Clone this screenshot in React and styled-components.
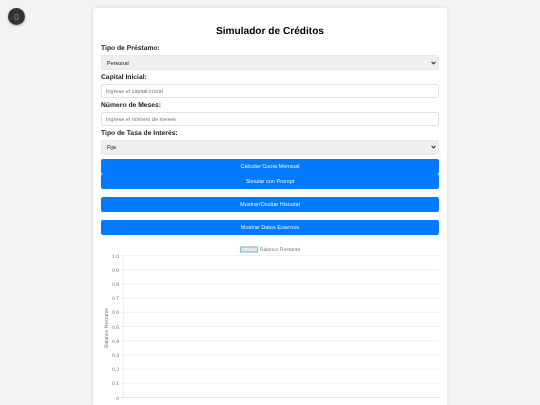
import React from 'react';
import styled, { createGlobalStyle } from 'styled-components';

const GlobalStyle = createGlobalStyle`
  * {
    box-sizing: border-box;
  }
  html, body {
    margin: 0;
    height: 405px;
    overflow: hidden;
    background: #f4f4f4;
    font-family: "Liberation Sans", Arial, sans-serif;
    text-rendering: geometricPrecision;
  }
`;

const chevron = encodeURIComponent(
  '<svg xmlns="http://www.w3.org/2000/svg" width="5" height="4" viewBox="0 0 5 4"><path d="M0.6 0.8 L2.5 2.9 L4.4 0.8" fill="none" stroke="#333" stroke-width="1.1"/></svg>'
);

const Page = styled.div`
  display: flex;
  justify-content: center;
  padding-top: 8px;
`;

const ThemeToggle = styled.button`
  position: absolute;
  left: 8px;
  top: 8px;
  width: 17px;
  height: 17px;
  padding: 0;
  display: flex;
  align-items: center;
  justify-content: center;
  border: none;
  border-radius: 50%;
  background: #333333;
  box-shadow: 0 1px 3px rgba(0, 0, 0, 0.3);
`;

const Card = styled.main`
  width: 354px;
  height: 397px;
  padding: 8px;
  background: #ffffff;
  border-radius: 4px 4px 0 0;
  box-shadow: 0 0 5px rgba(0, 0, 0, 0.1);
  will-change: transform;
`;

const Title = styled.h1`
  margin: 9px 0 2px;
  font-size: 10.15px;
  line-height: 14px;
  text-align: center;
  color: #000000;
`;

const Label = styled.label`
  display: block;
  height: ${(props) => props.$height || 14}px;
  padding-top: 1px;
  font-size: 6.75px;
  line-height: 13px;
  font-weight: 700;
  color: #222222;
`;

const Select = styled.select`
  display: block;
  width: 100%;
  height: 15px;
  margin-bottom: ${(props) => props.$gap}px;
  padding: 0 5px;
  appearance: none;
  font-family: inherit;
  font-size: 5.5px;
  color: #222222;
  background: #efefef url("data:image/svg+xml,${chevron}") no-repeat right 2px center;
  border: 1px solid #e9e9e9;
  border-radius: 2px;
`;

const Input = styled.input`
  display: block;
  width: 100%;
  height: 14px;
  padding: 0 4px;
  font-family: inherit;
  font-size: 5.5px;
  background: #ffffff;
  border: 1px solid #e2e2e2;
  border-radius: 2px;

  &::placeholder {
    color: #777777;
  }
`;

const Button = styled.button`
  display: block;
  width: 100%;
  height: 15px;
  margin-bottom: ${(props) => props.$gap}px;
  padding: 0;
  font-family: inherit;
  font-size: 5.55px;
  color: #e6f2ff;
  background: #007bff;
  border: none;
  border-radius: 2px;
`;

const ChartFrame = styled.svg`
  display: block;
  margin: 9.5px 0 0 -8px;
`;

const yTicks = ['1.0', '0.9', '0.8', '0.7', '0.6', '0.5', '0.4', '0.3', '0.2', '0.1', '0'];

// empty chart: only legend, axis and grid, coordinates relative to the chart box
const BalanceChart = () => (
  <ChartFrame width="354" height="158" viewBox="0 0 354 158">
    <rect x="147.5" y="3" width="17" height="5" fill="#e6e6e6" stroke="#7fc4c4" strokeWidth="1.2" />
    <text x="167" y="7.3" fontSize="5.1" fill="#777">Balance Restante</text>
    <text
      transform="translate(14.5 84) rotate(-90)"
      fontSize="5.1"
      fill="#777"
      textAnchor="middle"
    >
      Balance Restante
    </text>
    {yTicks.map((tick, i) => {
      const y = 11.5 + i * 14.2;
      return (
        <g key={tick}>
          <line x1="28" x2="346" y1={y} y2={y} stroke={i === 10 ? '#e2e2e2' : '#f0f0f0'} />
          <text x="26" y={y + 2} fontSize="5.1" fill="#777" textAnchor="end">{tick}</text>
        </g>
      );
    })}
    <line x1="30.5" x2="30.5" y1="11" y2="154" stroke="#eeeeee" />
  </ChartFrame>
);

const App = () => (
  <Page>
    <GlobalStyle />
    <ThemeToggle aria-label="tema">
      <svg width="5" height="6" viewBox="0 0 5 6">
        <rect x="1" y="0.5" width="3" height="5" fill="none" stroke="#666" />
      </svg>
    </ThemeToggle>
    <Card>
      <Title>Simulador de Créditos</Title>
      <Label htmlFor="tipo">Tipo de Préstamo:</Label>
      <Select id="tipo" defaultValue="personal" $gap={0}>
        <option value="personal">Personal</option>
      </Select>
      <Label htmlFor="capital">Capital Inicial:</Label>
      <Input id="capital" placeholder="Ingrese el capital inicial" />
      <Label htmlFor="meses">Número de Meses:</Label>
      <Input id="meses" placeholder="Ingrese el número de meses" />
      <Label htmlFor="tasa" $height={13.5}>Tipo de Tasa de Interés:</Label>
      <Select id="tasa" defaultValue="fija" $gap={4}>
        <option value="fija">Fija</option>
      </Select>
      <Button $gap={0}>Calcular Cuota Mensual</Button>
      <Button $gap={8}>Simular con Prompt</Button>
      <Button $gap={8}>Mostrar/Ocultar Historial</Button>
      <Button $gap={0}>Mostrar Datos Externos</Button>
      <BalanceChart />
    </Card>
  </Page>
);

export default App;
